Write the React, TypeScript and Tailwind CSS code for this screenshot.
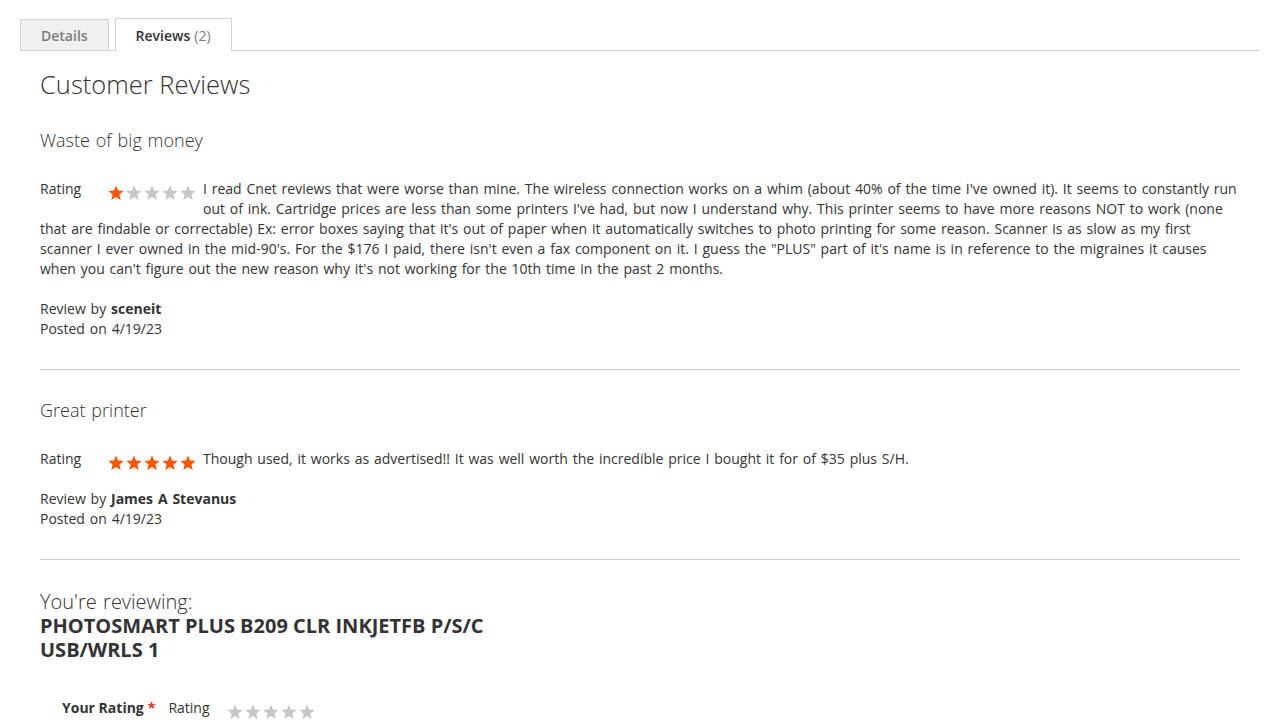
import React from "react";

const STAR = "8,0.5 10.12,5.59 15.61,6.03 11.42,9.61 12.7,14.97 8,12.1 3.3,14.97 4.58,9.61 0.39,6.03 5.88,5.59";

function Stars({ filled }: { filled: number }) {
  return (
    <div className="flex translate-y-[6px]">
      {[0, 1, 2, 3, 4].map((i) => (
        <svg key={i} width="18" height="16" viewBox="-1 0 18 16" className="block">
          <polygon points={STAR} fill={i < filled ? "#ff5501" : "#c7c7c7"} />
        </svg>
      ))}
    </div>
  );
}

function Review({
  title,
  rating,
  text,
  author,
  date,
}: {
  title: string;
  rating: number;
  text: string;
  author: string;
  date: string;
}) {
  return (
    <li className="border-b border-[#cccccc] py-[30px]">
      <div className="text-[18px] font-light leading-[20px] text-[#333] mb-[29px]">{title}</div>
      <div className="float-left flex mb-[20px] mr-[6px] h-[20px]">
        <span className="w-[67px] leading-[20px]">Rating</span>
        <Stars filled={rating} />
      </div>
      <div className="leading-[20px] mb-[20px]">{text}</div>
      <div className="clear-both leading-[20px]">
        Review by <strong className="font-bold">{author}</strong>
      </div>
      <div className="leading-[20px]">Posted on {date}</div>
    </li>
  );
}

export default function App() {
  return (
    <div
      className="bg-white text-[#333] text-[14px] min-h-[720px] px-[20px]"
      style={{ fontFamily: '"Open Sans", "Liberation Sans", sans-serif' }}
    >
      <div className="pt-[18px] flex items-end gap-[6px] border-b border-[#d1d1d1]">
        <div className="-mb-px h-[32px] px-[20px] flex items-center bg-[#f0f0f0] border border-[#d1d1d1] font-semibold text-[#7d7d7d]">
          Details
        </div>
        <div className="-mb-px h-[33px] px-[20px] flex items-center bg-white border border-b-0 border-[#d1d1d1] font-semibold text-[#333]">
          Reviews<span className="ml-[4px] font-normal text-[#7d7d7d]">(2)</span>
        </div>
      </div>

      <div className="px-[20px] pt-[19px] [word-spacing:1.2px]">
        <h2 className="text-[25.5px] font-light leading-[29px] text-[#333] mb-[1px] [word-spacing:0px]">
          Customer Reviews
        </h2>
        <ol>
          <Review
            title="Waste of big money"
            rating={1}
            text={`I read Cnet reviews that were worse than mine. The wireless connection works on a whim (about 40% of the time I've owned it). It seems to constantly run out of ink. Cartridge prices are less than some printers I've had, but now I understand why. This printer seems to have more reasons NOT to work (none that are findable or correctable) Ex: error boxes saying that it's out of paper when it automatically switches to photo printing for some reason. Scanner is as slow as my first scanner I ever owned in the mid-90's. For the $176 I paid, there isn't even a fax component on it. I guess the "PLUS" part of it's name is in reference to the migraines it causes when you can't figure out the new reason why it's not working for the 10th time in the past 2 months.`}
            author="sceneit"
            date="4/19/23"
          />
          <Review
            title="Great printer"
            rating={5}
            text="Though used, it works as advertised!! It was well worth the incredible price I bought it for of $35 plus S/H."
            author="James A Stevanus"
            date="4/19/23"
          />
        </ol>

        <div className="pt-[30px] max-w-[500px]">
          <div className="text-[20px] font-light leading-[24px]">You're reviewing:</div>
          <div className="text-[20px] font-bold leading-[24px] uppercase [word-spacing:0px]">
            PHOTOSMART PLUS B209 CLR INKJETFB P/S/C USB/WRLS 1
          </div>
        </div>

        <div className="mt-[36px] pl-[22px] flex items-start h-[20px] [word-spacing:0px]">
          <span className="font-bold leading-[20px]">Your Rating</span>
          <span className="text-[#e02b27] ml-[4px] leading-[20px] font-bold">*</span>
          <span className="ml-[13px] leading-[20px] w-[58px]">Rating</span>
          <Stars filled={0} />
        </div>
      </div>
    </div>
  );
}
